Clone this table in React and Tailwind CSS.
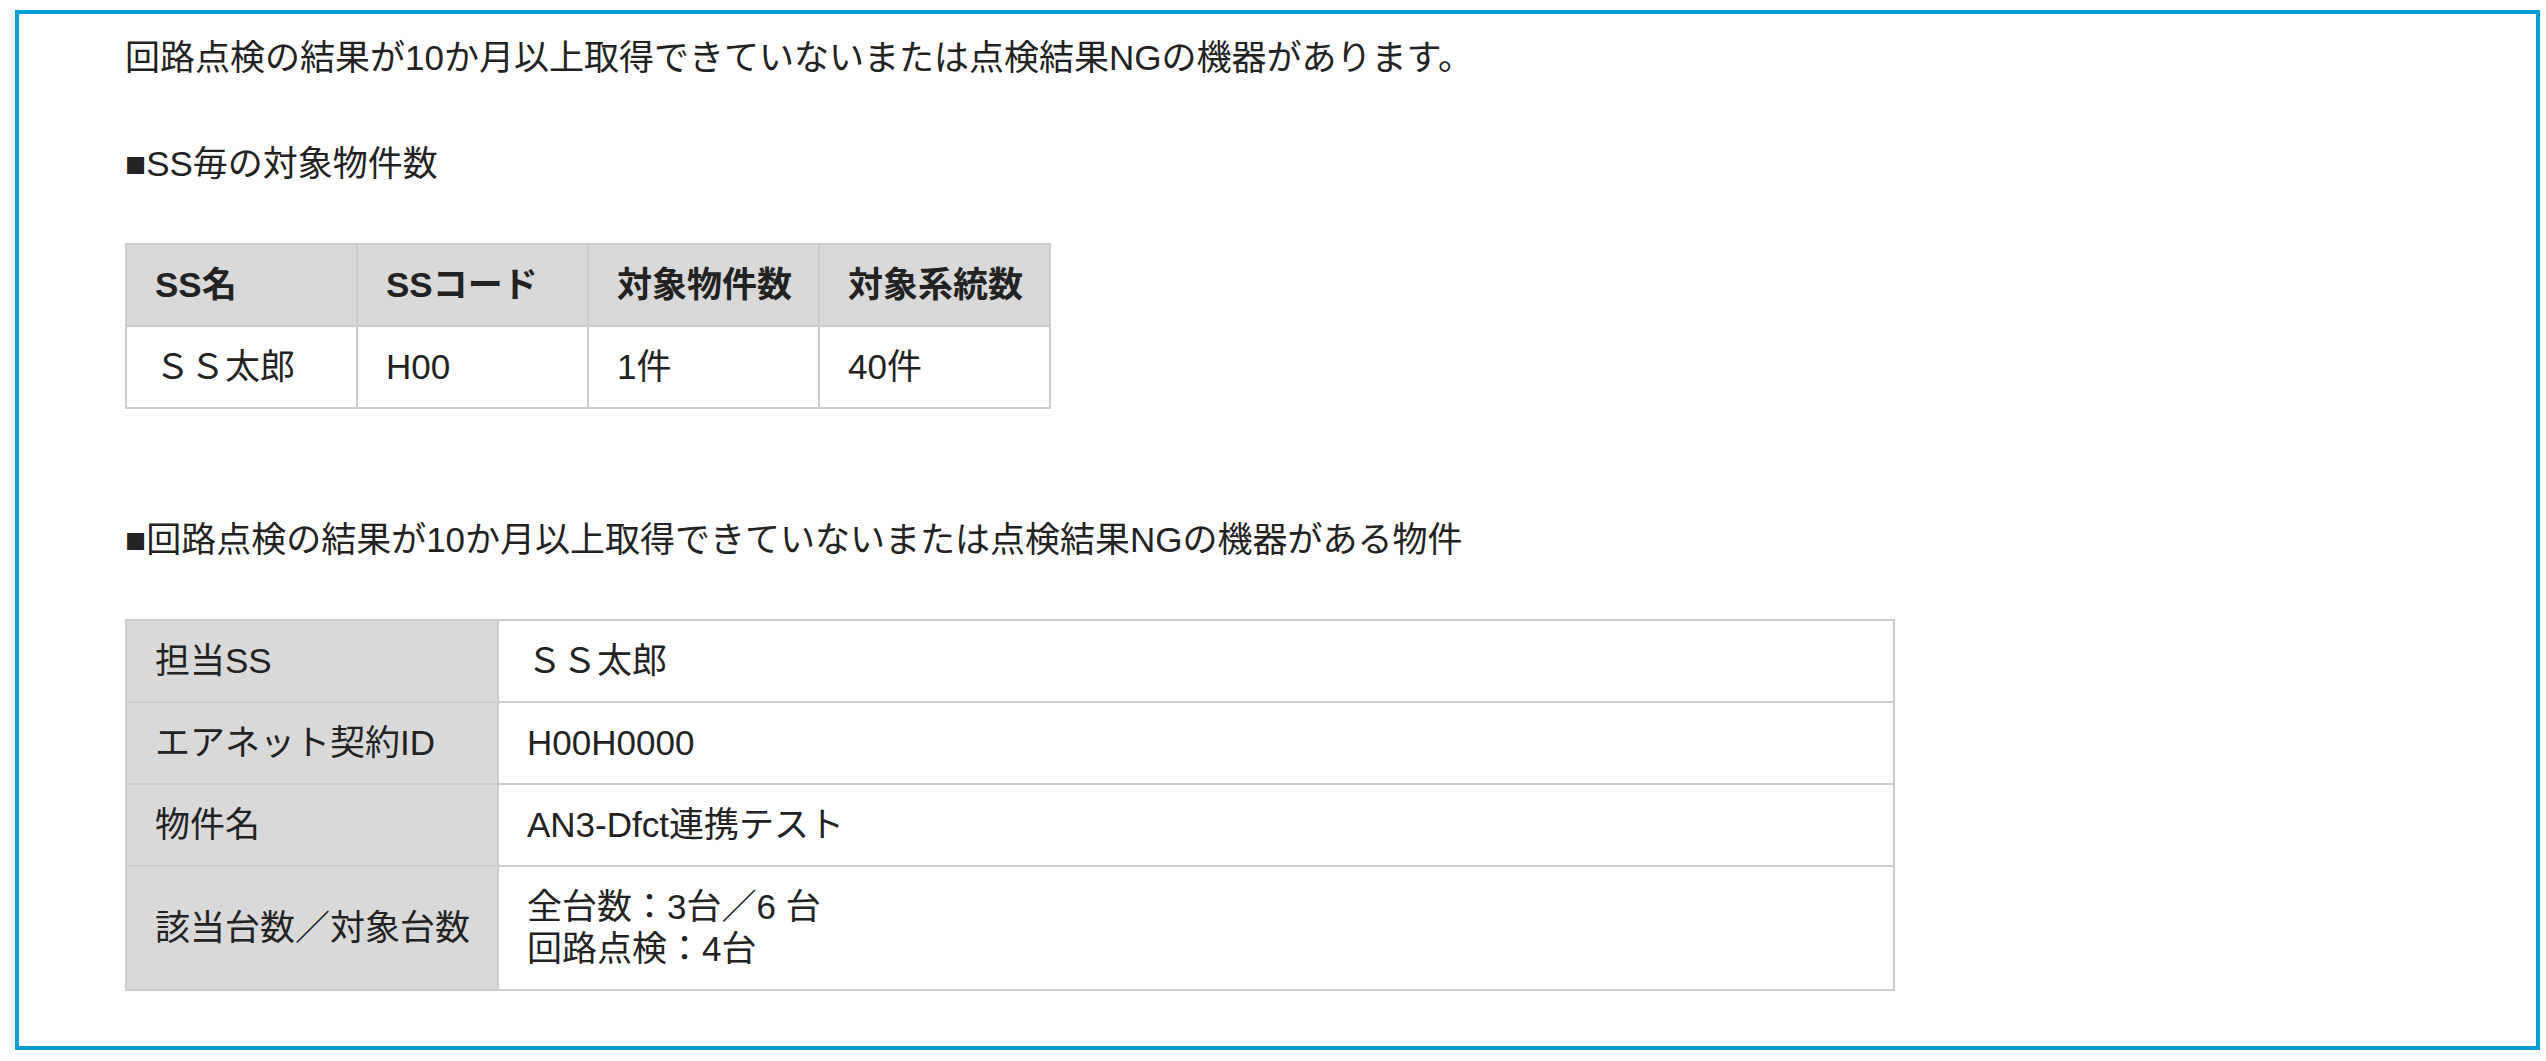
const summary = [{ name: 'ＳＳ太郎', code: 'H00', props: '1件', systems: '40件' }];

const detail = [
  { label: '担当SS', value: ['ＳＳ太郎'] },
  { label: 'エアネット契約ID', value: ['H00H0000'] },
  { label: '物件名', value: ['AN3-Dfct連携テスト'] },
  { label: '該当台数／対象台数', value: ['全台数：3台／6 台', '回路点検：4台'] },
];

const th = 'whitespace-nowrap border-2 border-[#cccccc] bg-[#d9d9d9] pl-[28px] pr-[12px] py-[19px] text-left font-bold';
const td = 'whitespace-nowrap border-2 border-[#cccccc] pl-[28px] pr-[12px] py-[19px] text-left font-normal';

export default function App() {
  return (
    <div
      className="min-h-screen bg-white pt-[10px] pl-[15px] pr-[6px] text-[35px] leading-[42px] text-[#222222]"
      style={{ fontFamily: '"Liberation Sans", "Noto Sans CJK JP", sans-serif' }}
    >
      <div className="box-border h-[1040px] border-4 border-[#0a9fd4] pl-[106px] pt-[23px]">
        <p>回路点検の結果が10か月以上取得できていないまたは点検結果NGの機器があります。</p>

        <p className="mt-[64px]">■SS毎の対象物件数</p>

        <table className="mt-[58px] w-[926px] table-fixed border-collapse">
          <thead>
            <tr>
              <th className={th}>SS名</th>
              <th className={th}>SSコード</th>
              <th className={th}>対象物件数</th>
              <th className={th}>対象系統数</th>
            </tr>
          </thead>
          <tbody>
            {summary.map((r) => (
              <tr key={r.code}>
                <td className={td}>{r.name}</td>
                <td className={td}>{r.code}</td>
                <td className={td}>{r.props}</td>
                <td className={td}>{r.systems}</td>
              </tr>
            ))}
          </tbody>
        </table>

        <p className="mt-[110px]">■回路点検の結果が10か月以上取得できていないまたは点検結果NGの機器がある物件</p>

        <table className="mt-[58px] w-[1770px] table-fixed border-collapse">
          <colgroup>
            <col className="w-[372px]" />
            <col />
          </colgroup>
          <tbody>
            {detail.map((r) => (
              <tr key={r.label}>
                <th className={`${th} font-normal`}>{r.label}</th>
                <td className={td}>
                  {r.value.map((line) => (
                    <div key={line}>{line}</div>
                  ))}
                </td>
              </tr>
            ))}
          </tbody>
        </table>
      </div>
    </div>
  );
}
